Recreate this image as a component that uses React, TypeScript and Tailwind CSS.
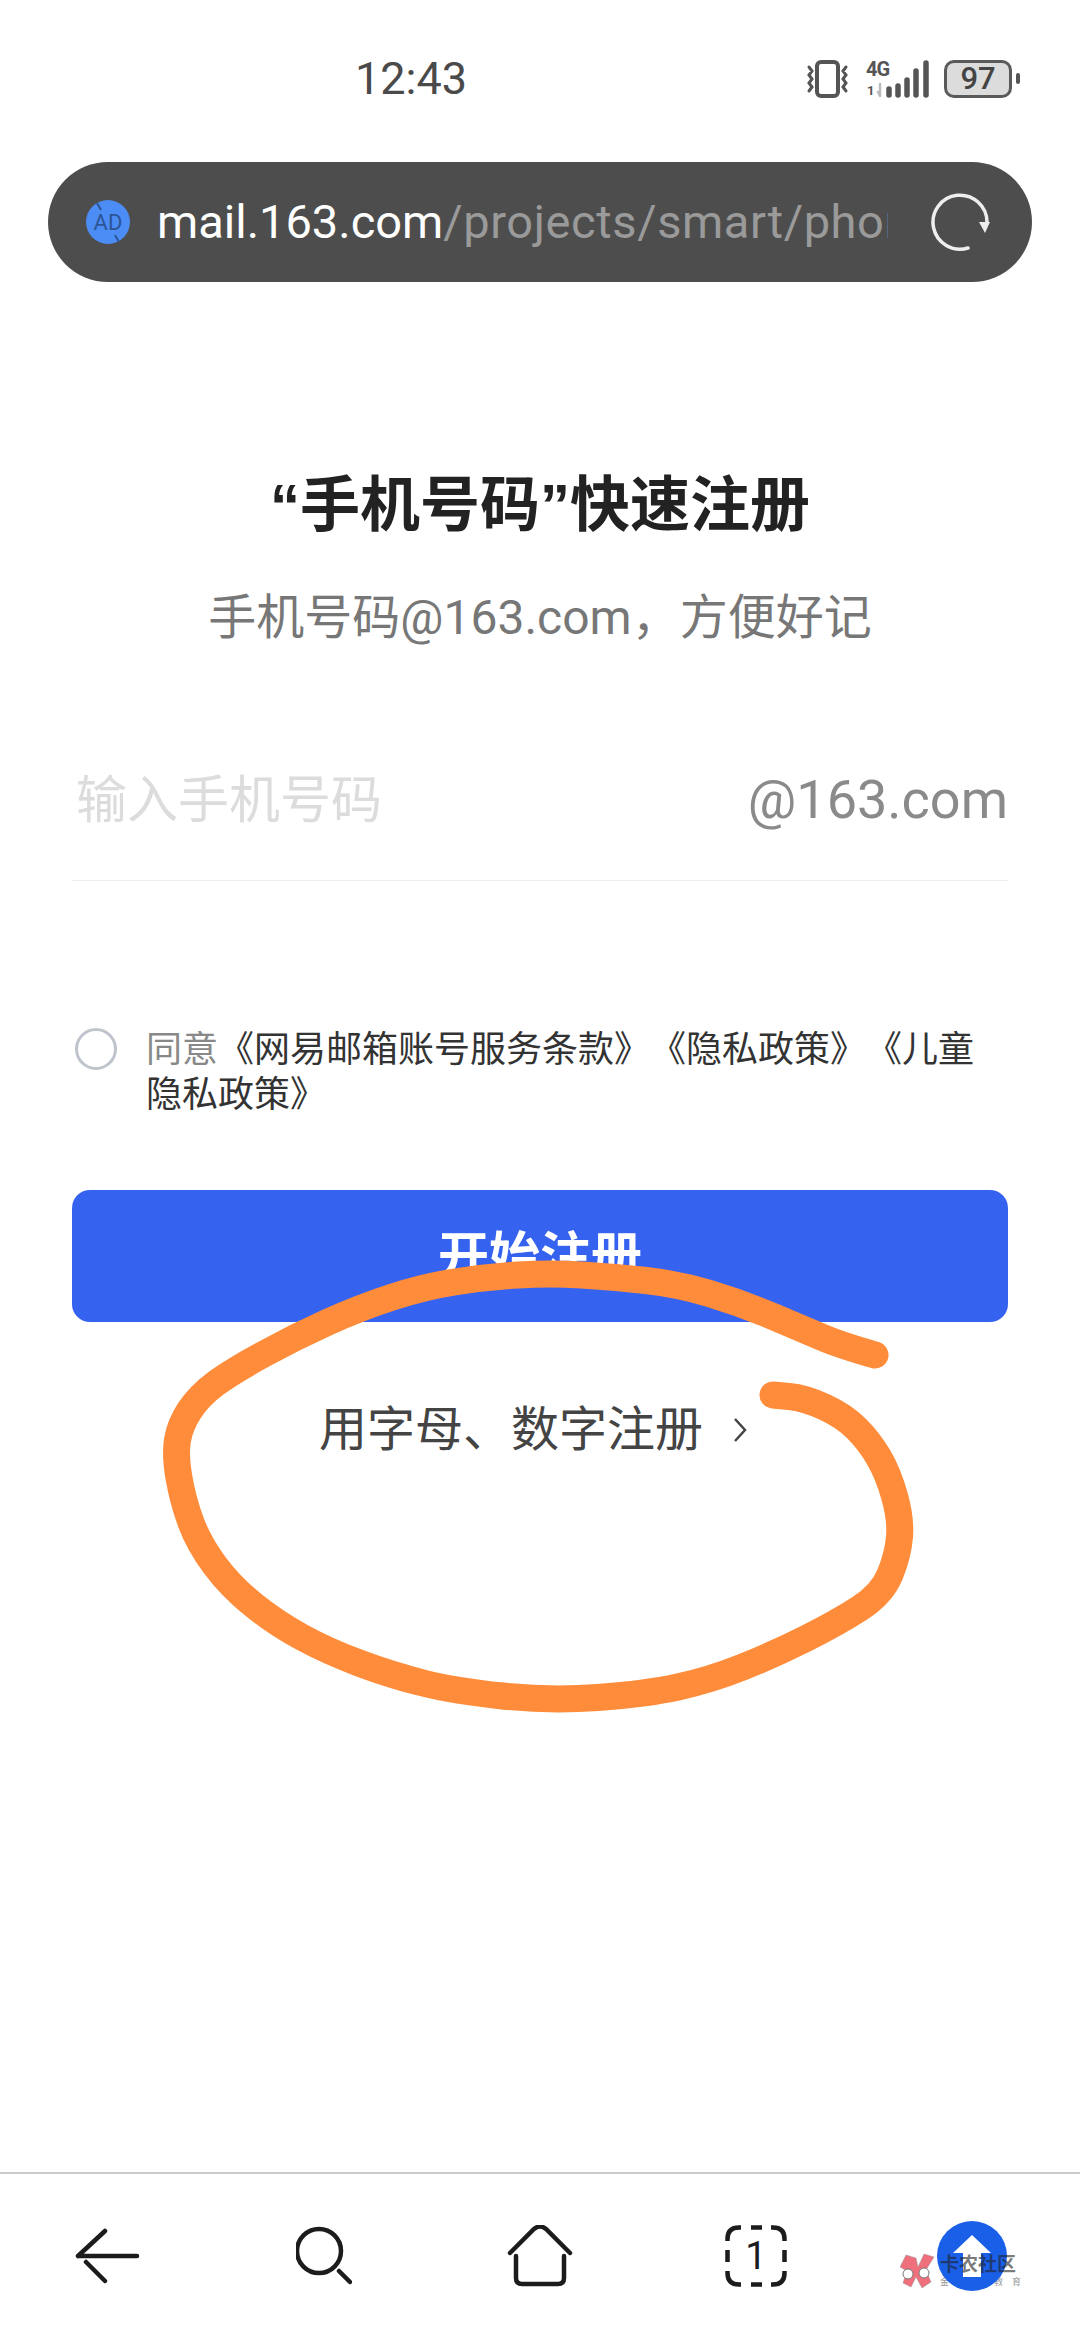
const cjk = "font-['Roboto','Noto_Sans_CJK_SC',sans-serif] [text-spacing-trim:space-all]"

const scribble: [number, number][] = [
  [875, 1355], [840, 1345], [805, 1330], [741, 1303], [678, 1284], [614, 1277], [550, 1273], [486, 1277],
  [423, 1287], [359, 1308], [295, 1337], [231, 1372], [199, 1396], [180, 1425], [175, 1455], [183, 1501],
  [199, 1544], [231, 1587], [276, 1623], [327, 1651], [391, 1675], [455, 1691], [550, 1701], [646, 1694],
  [710, 1680], [773, 1655], [837, 1623], [882, 1594], [898, 1555], [901, 1519], [888, 1473], [869, 1441],
  [844, 1416], [805, 1398], [773, 1395],
]

function toSmoothPath(points: [number, number][]): string {
  let d = `M${points[0][0]} ${points[0][1]}`
  for (let i = 1; i < points.length - 1; i++) {
    const midX = (points[i][0] + points[i + 1][0]) / 2
    const midY = (points[i][1] + points[i + 1][1]) / 2
    d += ` Q${points[i][0]} ${points[i][1]} ${midX} ${midY}`
  }
  const last = points[points.length - 1]
  return `${d} L${last[0]} ${last[1]}`
}

function StatusIcons() {
  return (
    <div className="flex items-center">
      <svg width="44" height="38" viewBox="0 0 44 38" fill="none" stroke="#555" strokeLinecap="round">
        <rect x="11" y="2" width="21" height="34" rx="4" strokeWidth="4" />
        <path d="M3 7l3 4-3 4 3 4-3 4 3 4-3 4M40 7l-3 4 3 4-3 4 3 4-3 4 3 4" strokeWidth="3" />
      </svg>
      <div className="relative ml-[16px] h-[38px] w-[64px]">
        <span className="absolute left-0 top-[-1px] font-['Roboto',sans-serif] text-[20px] font-bold leading-[20px] tracking-[-1px] text-[#555]">4G</span>
        <span className="absolute left-[1px] top-[24px] font-['Roboto',sans-serif] text-[13px] font-bold leading-[13px] text-[#555]">1</span>
        <svg className="absolute left-0 top-0" width="64" height="38" viewBox="0 0 64 38" fill="none" strokeLinecap="round">
          <path d="M14 24v12M14 36l-2-4" stroke="#bbb" strokeWidth="2.500" />
          <path d="M23 29v6M32 26v9M41 20v15M50 11v24M60 3v32" stroke="#555" strokeWidth="5.500" />
        </svg>
      </div>
      <div className="ml-[14px] flex h-[38px] w-[68px] items-center justify-center rounded-[10px] border-[3px] border-[#5a5a5a] bg-[#dcdcdc] font-['Roboto',sans-serif] text-[31px] font-medium leading-none text-[#444]">
        97
      </div>
      <div className="ml-[4px] h-[11px] w-[4px] rounded-full bg-[#555]" />
    </div>
  )
}

function AdIcon() {
  return (
    <svg width="44" height="44" viewBox="0 0 44 44" className="shrink-0">
      <circle cx="22" cy="22" r="22" fill="#4c8cf5" />
      <text x="22" y="30" textAnchor="middle" fontFamily="Roboto, sans-serif" fontSize="22" fill="#2c5596">AD</text>
      <path d="M11 3l4 7M29 35l4 7" stroke="#2c5596" strokeWidth="2" />
    </svg>
  )
}

function ReloadIcon() {
  return (
    <svg width="60" height="60" viewBox="0 0 60 60" fill="none" className="shrink-0">
      <path d="M38 56A27 27 0 1 1 57 30" stroke="#eee" strokeWidth="3.5" strokeLinecap="round" />
      <path d="M49 30h11l-5 11z" fill="#eee" />
    </svg>
  )
}

function NavIcon({ children }: { children: React.ReactNode }) {
  return <div className="flex items-center justify-center">{children}</div>
}

function BottomNav() {
  return (
    <nav className="relative grid h-[168px] shrink-0 grid-cols-5 border-t-2 border-[#cbcbcb] pb-[2px]">
      <NavIcon>
        <svg width="66" height="56" viewBox="0 0 66 56" fill="none" stroke="#1c1c1c" strokeWidth="4.5" strokeLinecap="round">
          <path d="M3 28h59M3 28L30 3M11 34l19 19" />
        </svg>
      </NavIcon>
      <NavIcon>
        <svg width="56" height="60" viewBox="0 0 56 60" fill="none" stroke="#1c1c1c" strokeLinecap="round">
          <circle cx="23" cy="25" r="22" strokeWidth="4.5" />
          <path d="M43 45l11 11" strokeWidth="4.5" />
        </svg>
      </NavIcon>
      <NavIcon>
        <svg width="66" height="62" viewBox="0 0 66 62" fill="none" stroke="#1c1c1c" strokeWidth="4.5" strokeLinecap="round">
          <path d="M3 28L27 4q6-5 12 0l24 24" />
          <path d="M9 31v22q0 6 6 6h36q6 0 6-6V31" />
        </svg>
      </NavIcon>
      <NavIcon>
        <div className="relative flex h-[62px] w-[62px] items-center justify-center font-['Roboto',sans-serif] text-[38px] leading-none text-[#1c1c1c]">
          <svg className="absolute inset-0" width="62" height="62" viewBox="0 0 62 62" fill="none" stroke="#1c1c1c" strokeWidth="4.5">
            <path d="M16 2.500h-2q-11.500 0-11.500 11.500v2M46 2.500h2q11.500 0 11.500 11.500v2M16 59.500h-2q-11.500 0-11.500-11.500v-2M46 59.500h2q11.500 0 11.500-11.500v-2M26 2.500h11M26 59.500h11M2.500 25v12M59.500 25v12" />
          </svg>
          1
        </div>
      </NavIcon>
      <NavIcon>
        <svg className="relative z-10" width="70" height="70" viewBox="0 0 70 70">
          <circle cx="35" cy="35" r="35" fill="#1a5fe8" />
          <path d="M35 14l19 18H44v24H26V32H16z" fill="#fff" />
        </svg>
      </NavIcon>

      {/* forum watermark stamped over the corner */}
      <span className={`${cjk} absolute left-[940px] top-[103px] z-0 whitespace-nowrap text-[9px] leading-[11px] tracking-[9px] text-[#999]`}>金融与教育</span>
      <div className="absolute left-[900px] top-[79px] z-20 flex items-start gap-[4px]">
        <svg width="36" height="36" viewBox="0 0 36 36">
          <path d="M6 2l10 3 2 9 6-13 10 3-8 13 5 12-9 6-6-11-5 10-8-4 4-12-7-4z" fill="#ef6f7c" stroke="#999" strokeWidth="0.5" />
          <circle cx="8" cy="21" r="5" fill="#fff" stroke="#777" strokeWidth="1" />
          <circle cx="24" cy="20" r="5" fill="#fff" stroke="#777" strokeWidth="1" />
        </svg>
        <span className={`${cjk} text-[19px] font-bold leading-[24px] text-[#222]/60`}>卡农社区</span>
      </div>
    </nav>
  )
}

export default function App() {
  return (
    <div className={`${cjk} relative flex h-[2340px] w-[1080px] flex-col overflow-hidden bg-white`}>
      <header className="flex h-[156px] items-center justify-between pl-[355px] pr-[60px] pt-[1px]">
        <span className="text-[45px] leading-none text-[#4a4a4a]">12:43</span>
        <StatusIcons />
      </header>

      <div className="mx-12 mt-[6px] flex h-[120px] items-center rounded-full bg-[#4d4d4d] pl-[38px] pr-[42px]">
        <AdIcon />
        <div className="ml-[27px] mr-[42px] min-w-0 flex-1 overflow-hidden whitespace-nowrap text-[47px] leading-[60px]">
          <span className="text-white">mail.163.com</span>
          <span className="tracking-[0.6px] text-[#9a9a9a]">/projects/smart/phone/register</span>
        </div>
        <ReloadIcon />
      </div>

      <h1 className="mt-[184px] text-center font-['Liberation_Sans','Noto_Sans_CJK_SC',sans-serif] text-[60px] font-bold leading-[80px] text-[#222]">
        “手机号码”快速注册
      </h1>
      <p className="mt-[42px] text-center text-[48px] leading-[60px] text-[#777]">
        手机号码@163.com，方便好记
      </p>

      <div className="mx-[72px] mt-[72px] flex h-[161px] items-center justify-between border-b border-[#eeeeee] pl-[4px]">
        <span className="text-[51px] leading-none text-[#dcdcdc]">输入手机号码</span>
        <span className="text-[54px] leading-none text-[#8a8a8a]">@163.com</span>
      </div>

      <div className="mx-[72px] mt-[147px] flex items-start">
        <div className="ml-[3px] h-[42px] w-[42px] shrink-0 rounded-full border-[3px] border-[#bfc3cb]" />
        <p className="ml-[29px] w-[830px] text-[36px] leading-[45px] text-[#333]">
          <span className="text-[#888]">同意</span>《网易邮箱账号服务条款》《隐私政策》《儿童隐私政策》
        </p>
      </div>

      <button className="mx-[72px] mt-[72px] flex h-[132px] items-center justify-center rounded-[18px] bg-[#3563f0] text-[51px] font-bold leading-none text-white">
        开始注册
      </button>

      <div className="mt-[72px] flex h-[72px] items-center justify-center pr-[14px] text-[48px] leading-none text-[#444]">
        <span>用字母、数字注册</span>
        <svg width="14" height="26" viewBox="0 0 14 26" fill="none" stroke="#444" strokeWidth="2.5" className="ml-[30px]">
          <path d="M2 2l10 11L2 24" />
        </svg>
      </div>

      <div className="flex-1" />
      <BottomNav />

      {/* hand drawn highlight over the page */}
      <svg className="pointer-events-none absolute inset-0" width="1080" height="2340" viewBox="0 0 1080 2340" fill="none">
        <path d={toSmoothPath(scribble)} stroke="#ff8c3a" strokeWidth="27" strokeLinecap="round" strokeLinejoin="round" />
      </svg>
    </div>
  )
}
